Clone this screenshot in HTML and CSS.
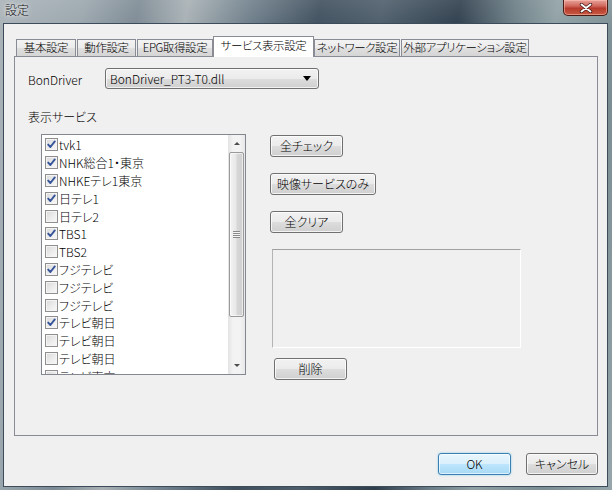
FILE: index.html
```html
<!DOCTYPE html>
<html lang="ja">
<head>
<meta charset="utf-8">
<title>設定</title>
<link rel="stylesheet" href="styles.css">
</head>
<body>
<div class="window">
  <div class="titlebar">
    <span class="title">設定</span>
    <div class="close">
      <svg width="14" height="10" viewBox="0 0 14 10"><path d="M2.5 1.5 L11.5 8.5 M11.5 1.5 L2.5 8.5" stroke="#3a1010" stroke-width="3.4" stroke-linecap="round"/><path d="M2.5 1.5 L11.5 8.5 M11.5 1.5 L2.5 8.5" stroke="#ffffff" stroke-width="2" stroke-linecap="round"/></svg>
    </div>
  </div>
  <div class="client">
    <div class="tabs">
      <div class="tab w1">基本設定</div>
      <div class="tab w2">動作設定</div>
      <div class="tab w3">EPG取得設定</div>
      <div class="tab sel w4">サービス表示設定</div>
      <div class="tab w5">ネットワーク設定</div>
      <div class="tab w6">外部アプリケーション設定</div>
    </div>
    <div class="panel">
      <div class="bon-row">
        <span class="bon-label">BonDriver</span>
        <div class="combo"><span>BonDriver_PT3-T0.dll</span><span class="combo-arrow"></span></div>
      </div>
      <div class="section-label">表示サービス</div>
      <div class="main">
        <div class="listbox">
          <div class="items">
            <div class="item"><span class="cb"><svg viewBox="0 0 11 11"><path d="M2.2 5.6 L4.4 8 L8.8 2.4" class="ck"/></svg></span>tvk1</div>
            <div class="item"><span class="cb"><svg viewBox="0 0 11 11"><path d="M2.2 5.6 L4.4 8 L8.8 2.4" class="ck"/></svg></span>NHK総合1・東京</div>
            <div class="item"><span class="cb"><svg viewBox="0 0 11 11"><path d="M2.2 5.6 L4.4 8 L8.8 2.4" class="ck"/></svg></span>NHKEテレ1東京</div>
            <div class="item"><span class="cb"><svg viewBox="0 0 11 11"><path d="M2.2 5.6 L4.4 8 L8.8 2.4" class="ck"/></svg></span>日テレ1</div>
            <div class="item"><span class="cb"></span>日テレ2</div>
            <div class="item"><span class="cb"><svg viewBox="0 0 11 11"><path d="M2.2 5.6 L4.4 8 L8.8 2.4" class="ck"/></svg></span>TBS1</div>
            <div class="item"><span class="cb"></span>TBS2</div>
            <div class="item"><span class="cb"><svg viewBox="0 0 11 11"><path d="M2.2 5.6 L4.4 8 L8.8 2.4" class="ck"/></svg></span>フジテレビ</div>
            <div class="item"><span class="cb"></span>フジテレビ</div>
            <div class="item"><span class="cb"></span>フジテレビ</div>
            <div class="item"><span class="cb"><svg viewBox="0 0 11 11"><path d="M2.2 5.6 L4.4 8 L8.8 2.4" class="ck"/></svg></span>テレビ朝日</div>
            <div class="item"><span class="cb"></span>テレビ朝日</div>
            <div class="item"><span class="cb"></span>テレビ朝日</div>
            <div class="item"><span class="cb"></span>テレビ東京</div>
          </div>
          <div class="scrollbar">
            <div class="sb-btn"><span class="arr-up"></span></div>
            <div class="sb-thumb"><span class="grip"></span></div>
            <div class="sb-track"></div>
            <div class="sb-btn"><span class="arr-down"></span></div>
          </div>
        </div>
        <div class="right-col">
          <div class="btn b73">全チェック</div>
          <div class="btn b106 gap">映像サービスのみ</div>
          <div class="btn b73 gap">全クリア</div>
          <div class="static-box"></div>
          <div class="btn b73 del">削除</div>
        </div>
      </div>
    </div>
    <div class="footer">
      <div class="btn b73 default">OK</div>
      <div class="btn b72">キャンセル</div>
    </div>
  </div>
</div>
</body>
</html>
```
FILE: styles.css
```css
* { box-sizing: border-box; }
html, body { margin: 0; padding: 0; }
body {
  width: 612px;
  height: 490px;
  overflow: hidden;
  font-family: "Noto Sans CJK JP", "Liberation Sans", sans-serif;
  font-feature-settings: "palt";
  font-weight: 300;
  font-size: 12px;
  color: #000;
}
.window {
  width: 612px;
  height: 490px;
  display: flex;
  flex-direction: column;
  padding: 0 4px 3px 3px;
  background:
    linear-gradient(180deg, rgba(255,255,255,0.10) 0, rgba(0,0,0,0) 30px),
    linear-gradient(100deg, #aab3b8 0%, #9aa6ad 12%, #7d8a94 20%, #a7b0b4 27%, #6f7f8b 36%, #3f4f5d 46%, #4d5d6a 55%, #2f3e4d 66%, #6c7e86 74%, #8fa0a4 80%, #7b8e93 90%, #96a6aa 100%);
}
.titlebar {
  height: 23px;
  display: flex;
  justify-content: space-between;
  align-items: flex-start;
  flex: none;
}
.title {
  margin: 3px 0 0 2px;
  line-height: 14px;
  font-size: 12px;
  color: #111;
  text-shadow: 0 0 6px rgba(255,255,255,0.9), 0 0 3px rgba(255,255,255,0.9);
}
.close {
  width: 45px;
  height: 16px;
  border: 1px solid #4a1a14;
  border-top: none;
  border-radius: 0 0 5px 5px;
  background: linear-gradient(180deg, #e8a39a 0%, #d0675c 40%, #b73a2c 55%, #c75a42 100%);
  box-shadow: inset 0 0 0 1px rgba(255,200,190,0.5);
  display: flex;
  align-items: center;
  justify-content: center;
}
.close svg { width: 14px; height: 10px; display: block; }
.client {
  height: 464px;
  border: 1px solid #3c4c5a;
  background: #f0f0f0;
  display: flex;
  flex-direction: column;
}
.tabs {
  display: flex;
  align-items: flex-end;
  height: 32px;
  padding: 12px 0 0 12px;
  flex: none;
}
.tab {
  height: 17px;
  border: 1px solid #898c95;
  border-bottom: none;
  background: linear-gradient(180deg, #f3f3f3 0%, #ebebeb 50%, #dfdfdf 51%, #d5d5d5 100%);
  text-align: center;
  line-height: 15px;
  font-size: 11.5px;
  letter-spacing: -0.4px;
  margin-right: 2px;
  white-space: nowrap;
  overflow: hidden;
}
.tab.sel {
  height: 21px;
  margin-bottom: -1px;
  margin-right: 0;
  background: #ffffff;
  line-height: 17px;
  position: relative;
  z-index: 1;
}
.w1 { width: 60px; margin-right: 1px; }
.w2 { width: 59px; margin-right: 1px; }
.w3 { width: 76px; margin-right: 0; }
.w4 { width: 101px; }
.w5 { width: 86px; margin-right: 1px; }
.w6 { width: 128px; }
.panel {
  height: 380px;
  margin-left: 10px;
  width: 584px;
  border: 1px solid #898c95;
  background: #f0f0f0;
  padding: 11px 0 0 13px;
  flex: none;
}
.bon-row {
  display: flex;
  align-items: center;
  height: 21px;
}
.bon-label {
  width: 77px;
  font-size: 12px;
  padding-top: 1px;
}
.combo {
  width: 214px;
  height: 21px;
  border: 1px solid #707070;
  border-radius: 3px;
  background: linear-gradient(180deg, #f2f2f2 0%, #ebebeb 50%, #dddddd 51%, #cfcfcf 100%);
  box-shadow: inset 0 0 0 1px rgba(255,255,255,0.7);
  display: flex;
  align-items: center;
  justify-content: space-between;
  padding: 0 7px 0 4px;
  line-height: 19px;
}
.combo-arrow {
  width: 0; height: 0;
  border-left: 4px solid transparent;
  border-right: 4px solid transparent;
  border-top: 5px solid #000;
}
.section-label {
  margin-top: 20px;
  line-height: 16px;
  height: 16px;
}
.main {
  display: flex;
  align-items: flex-start;
  margin-top: 9px;
}
.listbox {
  margin-left: 13px;
  width: 205px;
  height: 241px;
  border: 1px solid #828790;
  background: #fff;
  display: flex;
}
.items {
  flex: 1;
  overflow: hidden;
  padding: 1px 0 0 3px;
}
.item {
  height: 17.8px;
  display: flex;
  align-items: center;
  white-space: nowrap;
  font-size: 12px;
}
.cb {
  width: 13px;
  height: 13px;
  flex: none;
  border: 1px solid #8f8f8f;
  background: linear-gradient(135deg, #d8d8d8 0%, #eeeeee 60%, #f8f8f8 100%);
  box-shadow: inset 0 0 0 1px #f4f4f4;
  margin-right: 1px;
  display: flex;
  align-items: center;
  justify-content: center;
}
.cb svg { width: 11px; height: 11px; display: block; }
.ck { fill: none; stroke: #36549a; stroke-width: 1.9; stroke-linecap: round; stroke-linejoin: round; }
.scrollbar {
  width: 17px;
  flex: none;
  display: flex;
  flex-direction: column;
  background: linear-gradient(90deg, #e3e3e3 0%, #f3f3f3 30%, #f3f3f3 70%, #e8e8e8 100%);
}
.sb-btn {
  height: 17px;
  flex: none;
  display: flex;
  align-items: center;
  justify-content: center;
}
.arr-up {
  width: 0; height: 0;
  border-left: 3px solid transparent;
  border-right: 3px solid transparent;
  border-bottom: 3px solid #4d4d4d;
}
.arr-down {
  width: 0; height: 0;
  border-left: 3px solid transparent;
  border-right: 3px solid transparent;
  border-top: 3px solid #4d4d4d;
}
.sb-thumb {
  height: 165px;
  flex: none;
  margin: 0 1px;
  border: 1px solid #9a9a9a;
  border-radius: 2px;
  background: linear-gradient(90deg, #f3f3f3 0%, #e8e8e8 45%, #d7d7d7 55%, #cfcfcf 100%);
  box-shadow: inset 0 0 0 1px rgba(255,255,255,0.6);
  display: flex;
  align-items: center;
  justify-content: center;
}
.grip {
  width: 7px;
  height: 7px;
  background: repeating-linear-gradient(180deg, #8a8a8a 0, #8a8a8a 1px, #f4f4f4 1px, #f4f4f4 2px);
}
.sb-track { flex: 1; }
.right-col {
  display: flex;
  flex-direction: column;
  align-items: flex-start;
  margin-left: 24px;
  padding-top: 1px;
}
.btn {
  height: 22px;
  border: 1px solid #707070;
  border-radius: 3px;
  background: linear-gradient(180deg, #f2f2f2 0%, #ebebeb 50%, #dddddd 51%, #cfcfcf 100%);
  box-shadow: inset 0 0 0 1px rgba(255,255,255,0.75);
  text-align: center;
  line-height: 20px;
  font-size: 12px;
  white-space: nowrap;
  flex: none;
}
.b73 { width: 73px; }
.b72 { width: 72px; }
.b106 { width: 106px; }
.gap { margin-top: 16px; }
.static-box {
  margin-top: 16px;
  margin-left: 2px;
  width: 249px;
  height: 99px;
  border-top: 1px solid #a0a0a0;
  border-left: 1px solid #b4b4b4;
  border-right: 1px solid #ffffff;
  border-bottom: 1px solid #ffffff;
  background: #f0f0f0;
}
.del { margin-top: 10px; margin-left: 4px; }
.footer {
  display: flex;
  justify-content: flex-end;
  gap: 15px;
  margin-top: 17px;
  padding-right: 9px;
}
.btn.default {
  border-color: #3c7fb1;
  background: linear-gradient(180deg, #eaf6fd 0%, #d9f0fc 50%, #bee6fd 51%, #a7d9f5 100%);
  box-shadow: inset 0 0 0 1px rgba(255,255,255,0.6), 0 0 2px #6fc5f0;
}
```
